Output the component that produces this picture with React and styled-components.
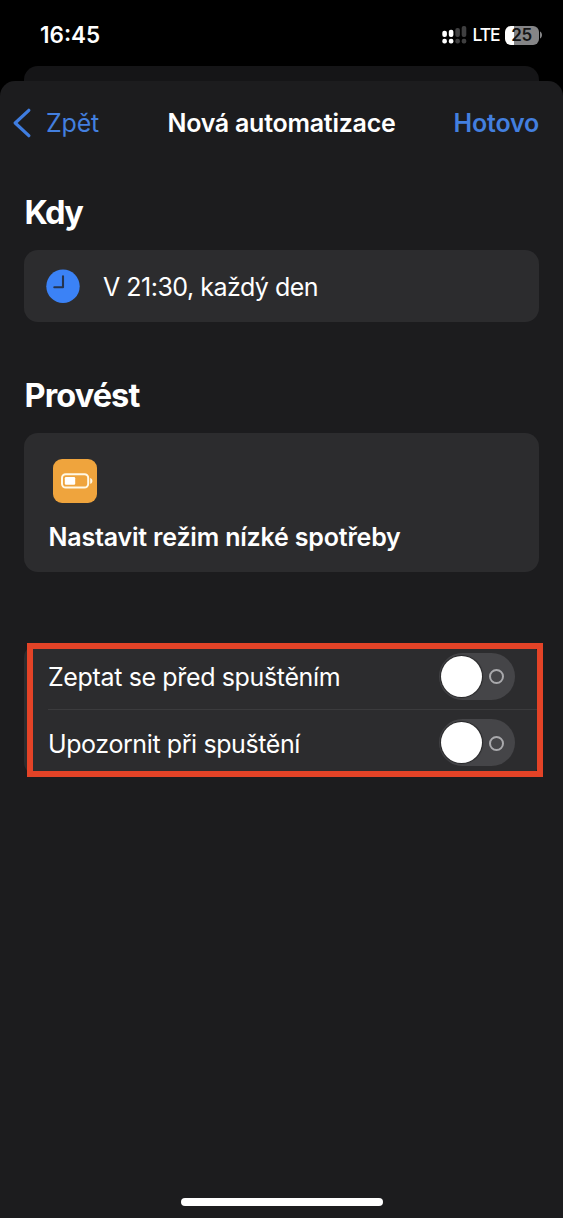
import React from 'react';
import styled, { createGlobalStyle } from 'styled-components';

function StatusBar() {
  return (
    <StatusRow>
      <Time>16:45</Time>
      <StatusIcons>
        <svg width='25' height='19' viewBox='0 0 25 19'>
          <g fill='#fff'>
            <rect x='0.3' y='4.8' width='4.6' height='6.2' rx='2' />
            <rect x='6.8' y='3.8' width='4.6' height='7.2' rx='2' />
            <rect x='0.3' y='12.7' width='4.6' height='4.8' rx='2' />
            <rect x='6.8' y='12.7' width='4.6' height='4.8' rx='2' />
          </g>
          <g fill='#3f3f40'>
            <rect x='13.3' y='2' width='4.6' height='9' rx='2' />
            <rect x='19.7' y='0' width='4.6' height='11' rx='2' />
            <rect x='13.3' y='12.7' width='4.6' height='4.8' rx='2' />
            <rect x='19.7' y='12.7' width='4.6' height='4.8' rx='2' />
          </g>
        </svg>
        <Network>LTE</Network>
        <Battery>
          <BatteryBody>25</BatteryBody>
          <svg width='4' height='8' viewBox='0 0 4 8'>
            <path d='M1 0.5C2.3 1.2 3 2.4 3 4S2.3 6.8 1 7.5Z' fill='#858587' />
          </svg>
        </Battery>
      </StatusIcons>
    </StatusRow>
  );
}

function SettingRow({ children, spacing }) {
  return (
    <Setting>
      <Label $spacing={spacing}>{children}</Label>
      <Toggle role='switch' aria-checked='false'>
        <Knob />
        <OffMark />
      </Toggle>
    </Setting>
  );
}

function App() {
  return (
    <Screen>
      <GlobalStyle />
      <StatusBar />
      <BackSheet />
      <Sheet>
        <NavBar>
          <BackButton>
            <svg width='19' height='30' viewBox='0 0 19 30'>
              <path
                d='M16.8 2.3L3.2 15L16.8 27.7'
                fill='none'
                stroke='#3f7de0'
                strokeWidth='3.2'
                strokeLinecap='round'
                strokeLinejoin='round'
              />
            </svg>
            <NavLabel $color='#437fdf' $spacing='-0.2px'>
              Zpět
            </NavLabel>
          </BackButton>
          <NavLabel $weight='600' $spacing='-0.25px'>
            Nová automatizace
          </NavLabel>
          <DoneButton>
            <NavLabel $color='#437fdf' $weight='600' $spacing='-0.2px'>
              Hotovo
            </NavLabel>
          </DoneButton>
        </NavBar>

        <Heading $spacing='-1.6px'>Kdy</Heading>
        <TriggerCard>
          <svg width='34' height='34' viewBox='0 0 34 34'>
            <circle cx='17' cy='17.3' r='16.7' fill='#3b82f6' />
            <path
              d='M17 7.2V18.2H8.3'
              fill='none'
              stroke='#25344f'
              strokeWidth='2.1'
              strokeLinecap='round'
              strokeLinejoin='round'
            />
          </svg>
          <Label $spacing='-0.5px'>V 21:30, každý den</Label>
        </TriggerCard>

        <Heading $top='52.5px' $bottom='17.5px' $spacing='-0.9px'>
          Provést
        </Heading>
        <ActionCard>
          <ActionIcon>
            <svg width='32' height='16' viewBox='0 0 32 16'>
              <rect
                x='1'
                y='1.2'
                width='26.2'
                height='13.4'
                rx='3.8'
                fill='none'
                stroke='#fff8e6'
                strokeWidth='2'
              />
              <rect x='3.8' y='4' width='10.4' height='7.8' rx='1.2' fill='#fff' />
              <path d='M29.2 5C30.8 5.6 31.4 6.6 31.4 7.9S30.8 10.2 29.2 10.8Z' fill='#fff8e6' />
            </svg>
          </ActionIcon>
          <Label $weight='600' $spacing='-0.19px'>
            Nastavit režim nízké spotřeby
          </Label>
        </ActionCard>

        <SettingsCard>
          <SettingRow spacing='-0.36px'>Zeptat se před spuštěním</SettingRow>
          <Divider />
          <SettingRow spacing='-0.4px'>Upozornit při spuštění</SettingRow>
        </SettingsCard>

        <HomeIndicator />
      </Sheet>
    </Screen>
  );
}

export default App;

// STYLED COMPONENTS
const GlobalStyle = createGlobalStyle`
  *,
  *::before,
  *::after {
    box-sizing: border-box;
  }

  body {
    margin: 0;
    background: #000;
  }

  svg {
    display: block;
    flex: none;
  }
`;

const Screen = styled.div`
  display: flex;
  flex-direction: column;
  width: 563px;
  height: 1218px;
  overflow: hidden;
  background: #000;
  color: #fff;
  font-family: Inter, 'Liberation Sans', sans-serif;
`;

const StatusRow = styled.header`
  display: flex;
  justify-content: space-between;
  height: 66px;
  padding: 0 20.5px 0 40px;
`;

const Time = styled.span`
  padding-top: 21px;
  font-size: 22.5px;
  font-weight: 600;
  line-height: 28px;
`;

const StatusIcons = styled.div`
  display: flex;
  align-items: center;
  height: 20px;
  margin-top: 25px;
`;

const Network = styled.span`
  width: 26px;
  margin: 0 6px;
  font-size: 17.5px;
  font-weight: 500;
  letter-spacing: -1.1px;
  line-height: 20px;
`;

const Battery = styled.div`
  display: flex;
  align-items: center;
`;

const BatteryBody = styled.div`
  width: 34px;
  height: 19px;
  border-radius: 6px;
  background: linear-gradient(90deg, #fff 9px, #858587 9px);
  color: #151516;
  font-size: 17px;
  font-weight: 600;
  letter-spacing: -0.4px;
  line-height: 19px;
  text-align: center;
`;

const BackSheet = styled.div`
  height: 15px;
  margin: 0 24px;
  border-radius: 14px 14px 0 0;
  background: #151517;
`;

const Sheet = styled.main`
  display: flex;
  flex: 1;
  flex-direction: column;
  padding: 0 24px;
  border-radius: 15px 15px 0 0;
  background: #1c1c1e;
`;

const NavBar = styled.nav`
  display: grid;
  grid-template-columns: 1fr auto 1fr;
  align-items: center;
  height: 84px;
  margin: 0 -12px;
`;

const BackButton = styled.div`
  display: flex;
  align-items: center;
  gap: 15px;
`;

const DoneButton = styled.div`
  display: flex;
  justify-content: flex-end;
  padding-right: 12px;
`;

const Label = styled.span`
  padding-top: 2px;
  color: ${(props) => props.$color || '#fff'};
  font-size: 25px;
  font-weight: ${(props) => props.$weight || 400};
  letter-spacing: ${(props) => props.$spacing || 'normal'};
  line-height: 32px;
  white-space: nowrap;
`;

const NavLabel = styled(Label)`
  padding-top: 0;
`;

const Heading = styled.h2`
  margin: ${(props) => props.$top || '27px'} 0 ${(props) => props.$bottom || '16.5px'};
  padding: 1px 0 0 0.5px;
  font-size: 32.5px;
  font-weight: 700;
  letter-spacing: ${(props) => props.$spacing};
  line-height: 40px;
`;

const Card = styled.section`
  border-radius: 14px;
  background: #2c2c2e;
`;

const TriggerCard = styled(Card)`
  display: flex;
  align-items: center;
  gap: 23px;
  height: 72.5px;
  padding: 0 22px;
`;

const ActionCard = styled(Card)`
  display: flex;
  flex-direction: column;
  align-items: flex-start;
  gap: 16px;
  height: 139px;
  padding: 26px 24px 0 24.5px;
`;

const ActionIcon = styled.div`
  display: flex;
  align-items: center;
  width: 44px;
  height: 44px;
  margin-left: 4.5px;
  padding-left: 8px;
  border-radius: 9px;
  background: #efa43d;
`;

const SettingsCard = styled(Card)`
  position: relative;
  margin-top: 71.5px;
  padding: 0 0 0 24px;

  /* red highlight frame drawn over the card */
  &::after {
    content: '';
    position: absolute;
    inset: -1px -4px -1px 3px;
    border: 6px solid #e34327;
  }
`;

const Setting = styled.div`
  display: flex;
  align-items: center;
  justify-content: space-between;
  height: 65.5px;
  padding-right: 24px;
`;

const Divider = styled.div`
  height: 1px;
  background: #3b3b3d;
`;

const Toggle = styled.div`
  display: flex;
  align-items: center;
  width: 76px;
  height: 47px;
  padding: 0 11px 0 2px;
  justify-content: space-between;
  border-radius: 24px;
  background: #454548;
`;

const Knob = styled.div`
  width: 41px;
  height: 41px;
  border-radius: 50%;
  background: #fff;
  box-shadow: 0 0 1px 1px rgba(0, 0, 0, 0.45);
`;

const OffMark = styled.div`
  width: 15px;
  height: 15px;
  margin-top: 1px;
  border: 2px solid #a9a9ac;
  border-radius: 50%;
`;

const HomeIndicator = styled.div`
  align-self: center;
  width: 202px;
  height: 8px;
  margin: auto 0 12px;
  border-radius: 4px;
  background: #fff;
`;
